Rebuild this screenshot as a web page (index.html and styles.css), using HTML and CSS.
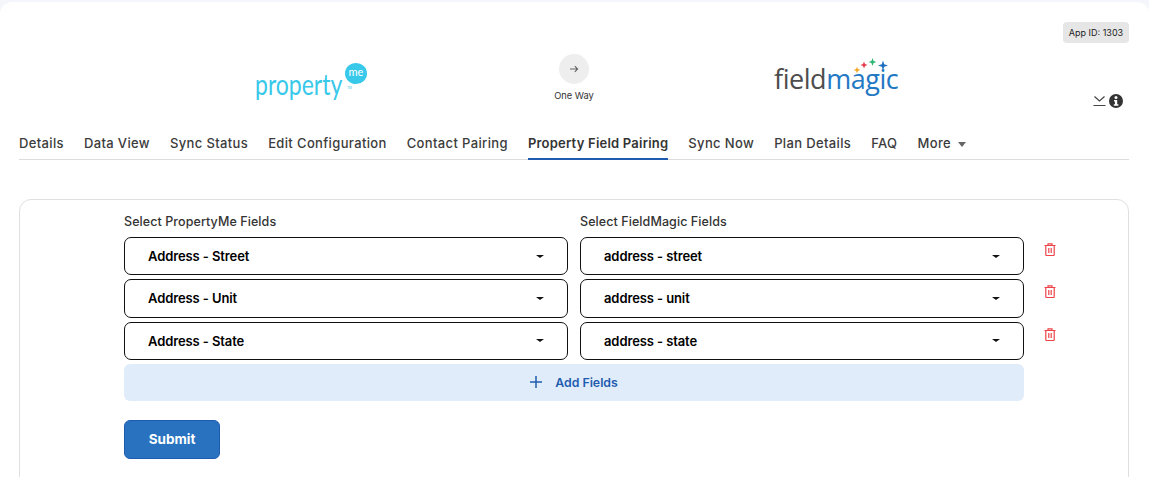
FILE: index.html
```html
<!DOCTYPE html>
<html lang="en">
<head>
<meta charset="utf-8">
<title>Property Field Pairing</title>
<link rel="stylesheet" href="styles.css">
</head>
<body>
<main class="shell">
  <div class="top-row"><span class="app-id">App ID: 1303</span></div>
  <header class="brands">
    <div class="logo-pm">
      <span class="pm-word">property</span>
      <span class="pm-bubble"><span class="pm-me">me</span></span>
      <span class="pm-tm">TM</span>
    </div>
    <div class="direction">
      <span class="direction-circle">
        <svg width="10" height="10" viewBox="0 0 10 10" fill="none" stroke="#666" stroke-width="1.1"><path d="M1 5h7.500M5.800 2.200 8.600 5 5.800 7.800"/></svg>
      </span>
      <span class="direction-label">One Way</span>
    </div>
    <div class="logo-fm">
      <svg class="fm-stars" width="40" height="18" viewBox="0 0 40 18">
        <path fill="#f5a623" d="M6 10.800 6.900 13.100 9.200 14 6.900 14.900 6 17.200 5.100 14.900 2.800 14 5.100 13.100z"/>
        <path fill="#e8394a" d="M13 5.500 14 8l2.500 1-2.500 1-1 2.500-1-2.500-2.500-1 2.500-1z"/>
        <path fill="#2fb573" d="M21.500 2l1.100 2.900 2.900 1.100-2.900 1.100L21.500 10l-1.100-2.900L17.500 6l2.900-1.100z"/>
        <path fill="#1f6fbf" d="M32 4.500l1.200 3.800L37 9.500l-3.800 1.200L32 14.500l-1.200-3.800L27 9.500l3.800-1.200z"/>
      </svg>
      <span class="fm-word"><span class="fm-field">field</span><span class="fm-magic">magic</span></span>
    </div>
    <div class="header-tools">
      <svg width="13" height="12" viewBox="0 0 13 12" fill="none" stroke="#444" stroke-width="1.200"><path d="M1.500 1.500 6.500 6l5-4.500M.5 10.500h12"/></svg>
      <svg width="14" height="14" viewBox="0 0 14 14"><circle cx="7" cy="7" r="7" fill="#333"/><circle cx="7" cy="3.600" r="1.500" fill="#fff"/><path fill="#fff" d="M5 6h3.200v4.300H9.400v1.500H4.800v-1.500h1.100V7.500H5z"/></svg>
    </div>
  </header>
  <nav class="tabs">
    <a class="tab">Details</a>
    <a class="tab">Data View</a>
    <a class="tab">Sync Status</a>
    <a class="tab">Edit Configuration</a>
    <a class="tab">Contact Pairing</a>
    <a class="tab active">Property Field Pairing</a>
    <a class="tab">Sync Now</a>
    <a class="tab">Plan Details</a>
    <a class="tab">FAQ</a>
    <a class="tab">More <span class="caret-more"></span></a>
  </nav>
  <section class="panel">
    <div class="form">
      <div class="labels">
        <span class="label">Select PropertyMe Fields</span>
        <span class="label">Select FieldMagic Fields</span>
      </div>
      <div class="row">
        <div class="select"><span>Address - Street</span><i class="caret"></i></div>
        <div class="select"><span>address - street</span><i class="caret"></i></div>
        <svg class="trash" width="12" height="13" viewBox="0 0 12 13" fill="none" stroke="#ee4449" stroke-width="1.200"><path d="M.5 2.500h11M4 2.500V.8h4v1.700M1.800 2.500v9.200a.8.800 0 0 0 .8.800h6.800a.8.800 0 0 0 .8-.800V2.500M4.800 5v5M7.200 5v5"/></svg>
      </div>
      <div class="row">
        <div class="select"><span>Address - Unit</span><i class="caret"></i></div>
        <div class="select"><span>address - unit</span><i class="caret"></i></div>
        <svg class="trash" width="12" height="13" viewBox="0 0 12 13" fill="none" stroke="#ee4449" stroke-width="1.200"><path d="M.5 2.500h11M4 2.500V.8h4v1.700M1.800 2.500v9.200a.8.800 0 0 0 .8.800h6.800a.8.800 0 0 0 .8-.800V2.500M4.800 5v5M7.200 5v5"/></svg>
      </div>
      <div class="row">
        <div class="select"><span>Address - State</span><i class="caret"></i></div>
        <div class="select"><span>address - state</span><i class="caret"></i></div>
        <svg class="trash" width="12" height="13" viewBox="0 0 12 13" fill="none" stroke="#ee4449" stroke-width="1.200"><path d="M.5 2.500h11M4 2.500V.8h4v1.700M1.800 2.500v9.200a.8.800 0 0 0 .8.800h6.800a.8.800 0 0 0 .8-.800V2.500M4.800 5v5M7.200 5v5"/></svg>
      </div>
      <button class="add-fields" type="button">
        <svg width="12" height="12" viewBox="0 0 12 12" stroke="#1f5cb0" stroke-width="1.500"><path d="M6 0v12M0 6h12"/></svg>
        <span>Add Fields</span>
      </button>
      <button class="submit" type="button">Submit</button>
    </div>
  </section>
</main>
</body>
</html>
```
FILE: styles.css
```css
* { box-sizing: border-box; }
html, body { margin: 0; height: 477px; overflow: hidden; }
body {
  background: #f5f6fb;
  padding-top: 2px;
  font-family: "Inter", "Liberation Sans", sans-serif;
  color: #333;
}
.shell {
  background: #fff;
  border-radius: 12px 12px 0 0;
  padding: 20px 20px 0 19px;
  height: 475px;
  overflow: hidden;
}
.top-row { display: flex; justify-content: flex-end; height: 21px; }
.app-id {
  background: #e6e6e6;
  border-radius: 4px;
  width: 66px;
  height: 21px;
  font-size: 9px;
  line-height: 21px;
  text-align: center;
  color: #222;
  white-space: nowrap;
}
.brands { position: relative; height: 79px; margin-top: 7px; display: block; }
.logo-pm { position: absolute; left: 236px; top: 0; width: 116px; height: 50px; }
.pm-word {
  position: absolute; left: 0; top: 26px;
  font-family: "Lato", sans-serif; font-weight: 400;
  font-size: 23px; line-height: 16px; color: #37c8ea;
  transform: scaleY(1.25);
  transform-origin: left center;
}
.pm-bubble {
  position: absolute; left: 90px; top: 13px;
  width: 22px; height: 21px; border-radius: 50%;
  background: #37c8ea;
}
.pm-me {
  display: block; color: #fff;
  font: 400 11px/10px "Lato", sans-serif; text-align: center;
  margin-top: 4px;
}
.pm-tm { position: absolute; left: 92px; top: 36px; font-size: 3px; line-height: 4px; color: #37c8ea; }
.direction {
  position: absolute; left: 525px; top: 4px; width: 60px;
  display: flex; flex-direction: column; align-items: center; gap: 5px;
}
.direction-circle {
  width: 30px; height: 30px; border-radius: 50%; background: #eee;
  display: flex; align-items: center; justify-content: center;
}
.direction-label { font-size: 9.300px; line-height: 13px; color: #333; }
.logo-fm { position: absolute; left: 755px; top: 0; width: 130px; height: 46px; }
.fm-stars { position: absolute; left: 77px; top: 6px; }
.fm-word {
  position: absolute; left: 0; top: 13px;
  font: 400 27px/32px "Open Sans", sans-serif; letter-spacing: -.45px;
}
.fm-field { color: #4d4d4d; }
.fm-magic { color: #2378c4; }
.header-tools {
  position: absolute; right: 6px; top: 44px;
  display: flex; align-items: center; gap: 3px;
}
.tabs {
  display: flex; gap: 20px;
  height: 31px; border-bottom: 1px solid #dcdcdc;
  font-size: 13px; line-height: 16px; font-weight: 500;
  letter-spacing: .36px; color: #3b3b3b;
}
.tab { display: block; padding-top: 6px; height: 31px; white-space: nowrap; }
.tab.active { border-bottom: 2px solid #1f5cb0; color: #333; font-weight: 600; letter-spacing: .22px; }
.caret-more {
  display: inline-block; margin-left: 3px; vertical-align: 1px;
  border-left: 4.500px solid transparent; border-right: 4.500px solid transparent;
  border-top: 5px solid #666;
}
.panel {
  margin-top: 39px;
  border: 1px solid #dfdfdf;
  border-radius: 12px;
  height: 320px;
  padding: 14px 0 0 104px;
}
.form { width: 940px; display: flex; flex-direction: column; }
.labels {
  display: grid; grid-template-columns: 444px 444px; column-gap: 12px;
  font-size: 12.500px; line-height: 16px; font-weight: 500; color: #333;
  letter-spacing: .08px;
  margin-bottom: 7px;
}
.row {
  display: grid; grid-template-columns: 444px 444px 12px; column-gap: 12px;
  margin-bottom: 4px;
  position: relative;
}
.select {
  height: 38.250px; border: 1.500px solid #111; border-radius: 7px;
  padding: 0 23px; display: flex; align-items: center; justify-content: space-between;
  font-size: 13px; font-weight: 600; color: #000; letter-spacing: -.1px;
}
.caret {
  border-left: 4.500px solid transparent; border-right: 4.500px solid transparent;
  border-top: 3.500px solid #111;
}
.trash { position: absolute; left: 920px; top: 6px; }
.add-fields {
  height: 37px; background: #e1ecfa; border: 0; border-radius: 6px;
  width: 900px;
  display: flex; align-items: center; justify-content: center; gap: 13px;
  font: 600 12.300px "Inter", sans-serif; color: #1f5cb0; padding: 0;
}
.submit {
  margin-top: 19px; width: 96px; height: 39px;
  background: #2872c0; border: 1px solid #1f5cb0; border-radius: 6px;
  color: #fff; font: 700 13.500px "Inter", sans-serif;
}
```
